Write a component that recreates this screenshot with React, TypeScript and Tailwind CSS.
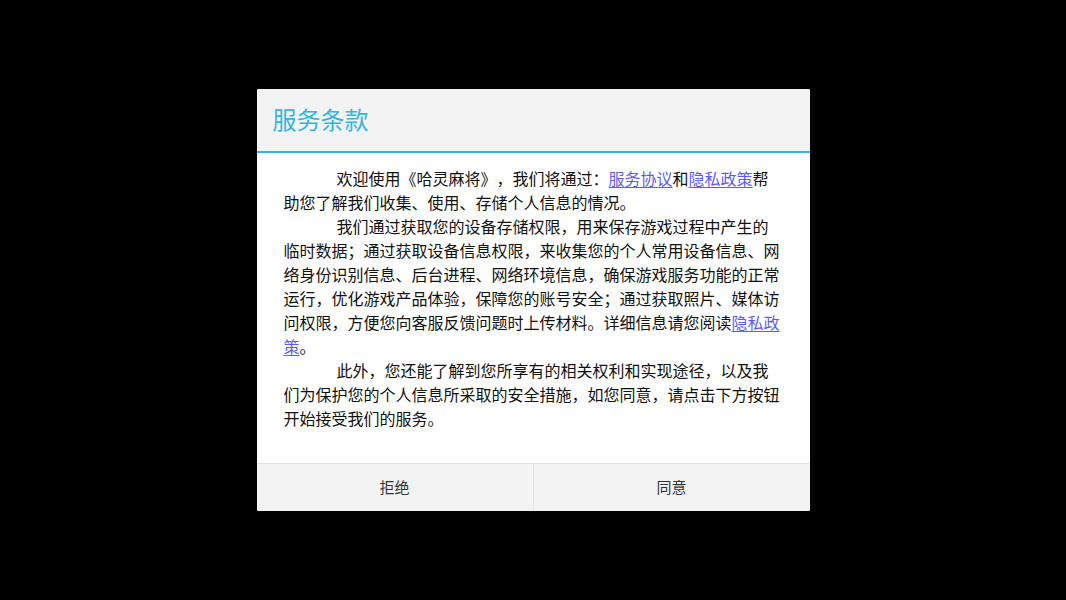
import React from "react";

export default function App() {
  const link = "text-[#5b5bff] underline underline-offset-2";
  return (
    <div
      className="w-[1066px] h-[600px] bg-black flex items-center justify-center"
      style={{ fontFamily: '"Noto Sans CJK SC", "Noto Sans", sans-serif' }}
    >
      <div className="w-[553px] h-[422px] bg-white rounded-[2px] overflow-hidden flex flex-col">
        <div className="h-[64px] bg-[#f3f3f3] flex items-center pl-[16px] border-b-2 border-[#33b5e5]">
          <span className="text-[24px] leading-none text-[#33b5e5] -mt-[2px]">服务条款</span>
        </div>
        <div className="flex-1 pl-[27px] pr-[29px] pt-[13px] text-[16px] leading-[24px] text-[#111] [text-spacing-trim:space-all]">
          <p className="indent-[53px]">
            欢迎使用《哈灵麻将》，我们将通过：<span className={link}>服务协议</span>和
            <span className={link}>隐私政策</span>帮助您了解我们收集、使用、存储个人信息的情况。
          </p>
          <p className="indent-[53px]">
            我们通过获取您的设备存储权限，用来保存游戏过程中产生的临时数据；通过获取设备信息权限，来收集您的个人常用设备信息、网络身份识别信息、后台进程、网络环境信息，确保游戏服务功能的正常运行，优化游戏产品体验，保障您的账号安全；通过获取照片、媒体访问权限，方便您向客服反馈问题时上传材料。详细信息请您阅读
            <span className={link}>隐私政策</span>。
          </p>
          <p className="indent-[53px]">
            此外，您还能了解到您所享有的相关权利和实现途径，以及我们为保护您的个人信息所采取的安全措施，如您同意，请点击下方按钮开始接受我们的服务。
          </p>
        </div>
        <div className="h-[48px] flex bg-[#f3f3f3] border-t border-[#e2e2e2]">
          <div className="flex-1 flex items-center justify-center text-[15px] text-[#333] border-r border-[#e2e2e2]">
            拒绝
          </div>
          <div className="flex-1 flex items-center justify-center text-[15px] text-[#333]">
            同意
          </div>
        </div>
      </div>
    </div>
  );
}
